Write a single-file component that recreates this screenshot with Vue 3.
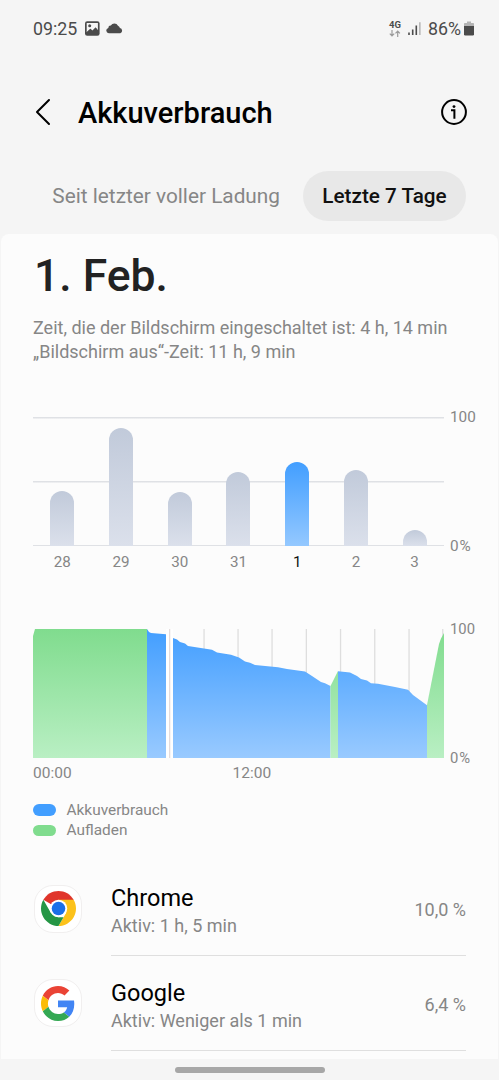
<template>
  <div class="screen">
    <div class="status-bar">
      <span class="clock">09:25</span>
      <svg class="icon-image" width="15" height="15" viewBox="0 0 15 15">
        <rect x="0" y="0.3" width="14.6" height="14.4" rx="2.2" fill="#4b4b4b" />
        <path d="M1.7 11.2V2.1h11.2v7.2L10.6 6.4 7.4 9.7 5.4 7.8z" fill="#f5f5f5" />
        <path d="M1.7 11.2 5.4 7.8l2 1.9 3.2-3.3 2.3 2.9v3.6H1.7z" fill="#4b4b4b" />
        <circle cx="4.7" cy="4.8" r="1.5" fill="#4b4b4b" />
      </svg>
      <svg class="icon-cloud" width="17" height="11" viewBox="0 0 17 11">
        <path
          d="M2.8 10.2a2.7 2.7 0 0 1-.5-5.3A2.4 2.4 0 0 1 4.8 2.6 4.2 4.2 0 0 1 12 2.7a3.200 3.200 0 0 1 1.900 2.300 2.700 2.700 0 0 1 .4 5.200z"
          fill="#4b4b4b"
        />
      </svg>
      <span class="spacer"></span>
      <div class="network">
        <span class="network-type">4G</span>
        <svg width="12" height="7" viewBox="0 0 12 7" fill="none" stroke="#9b9b9b" stroke-width="1.2">
          <path d="M3 0v5.8M.8 3.7 3 6l2.2-2.3M8.7 7V1M6.5 3.3 8.7 1l2.2 2.3" />
        </svg>
      </div>
      <svg class="icon-signal" width="14" height="14" viewBox="0 0 14 14">
        <path d="M.2 10.6h1.6V13H.2zM3.9 7.4h1.6V13H3.9zM7.5 3.6h1.6V13H7.5z" fill="#4b4b4b" />
        <path d="M11.1.3h1.5V13h-1.5z" fill="#b4b4b4" />
      </svg>
      <span class="battery-text">86%</span>
      <svg class="icon-battery" width="10" height="15" viewBox="0 0 10 15">
        <path d="M3 .5h4v1.4h2.2a.8.8 0 0 1 .8.8V5H0V2.7a.8.8 0 0 1 .8-.8H3z" fill="#b4b4b4" />
        <path d="M0 4.900h10v8.400a1.200 1.200 0 0 1-1.200 1.200H1.200A1.200 1.200 0 0 1 0 13.300z" fill="#4b4b4b" />
      </svg>
    </div>

    <header class="header">
      <svg width="16" height="28" viewBox="0 0 16 28" fill="none" stroke="#000" stroke-width="2">
        <path d="M14 2 2 14l12 12" stroke-linecap="round" stroke-linejoin="round" />
      </svg>
      <h1 class="title">Akkuverbrauch</h1>
      <svg class="info" width="28" height="28" viewBox="0 0 28 28">
        <circle cx="14" cy="14" r="11.9" fill="none" stroke="#000" stroke-width="2" />
        <circle cx="14" cy="8.6" r="1.45" fill="#000" />
        <path d="M11 12.3h3.4v8.4" fill="none" stroke="#000" stroke-width="2" />
      </svg>
    </header>

    <nav class="tabs">
      <span class="tab">Seit letzter voller Ladung</span>
      <span class="tab tab-active">Letzte 7 Tage</span>
    </nav>

    <main class="panel">
      <h2 class="date">1. Feb.</h2>
      <p class="summary">
        Zeit, die der Bildschirm eingeschaltet ist: 4 h, 14 min<br />
        „Bildschirm aus“-Zeit: 11 h, 9 min
      </p>

      <section class="chart">
        <div class="bars">
          <div v-for="d in days" :key="d.label" class="bar-col">
            <div class="bar" :class="{ selected: d.selected }" :style="{ height: d.height + 'px' }"></div>
          </div>
        </div>
        <div class="axis">
          <span>100</span>
          <span class="zero">0%</span>
        </div>
      </section>
      <div class="day-labels">
        <span v-for="d in days" :key="d.label" :class="{ current: d.selected }">{{ d.label }}</span>
      </div>

      <section class="chart history">
        <svg width="411" height="129" viewBox="0 0 411 129">
          <defs>
            <linearGradient id="use" gradientUnits="userSpaceOnUse" x1="0" y1="0" x2="0" y2="129">
              <stop offset="0" stop-color="#429eff" />
              <stop offset="1" stop-color="#99caff" />
            </linearGradient>
            <linearGradient id="charge" gradientUnits="userSpaceOnUse" x1="0" y1="0" x2="0" y2="129">
              <stop offset="0" stop-color="#80dc8e" />
              <stop offset="1" stop-color="#b9efc3" />
            </linearGradient>
          </defs>
          <rect v-for="x in gridLines" :key="x" :x="x" y="0" width="1.3" height="129" fill="#dedede" />
          <polygon v-for="(a, i) in areas" :key="i" :points="a.points" :fill="`url(#${a.type})`" />
          <rect x="133" y="0" width="7" height="129" fill="#fff" />
          <rect x="136" y="0" width="1.3" height="129" fill="#e4dcdc" />
        </svg>
        <div class="axis">
          <span>100</span>
          <span class="zero">0%</span>
        </div>
      </section>
      <div class="time-labels">
        <span>00:00</span>
        <span>12:00</span>
      </div>

      <ul class="legend">
        <li><i class="pill use"></i>Akkuverbrauch</li>
        <li><i class="pill charge"></i>Aufladen</li>
      </ul>

      <ul class="apps">
        <li v-for="app in apps" :key="app.name" class="app">
          <div class="app-icon">
            <svg v-if="app.icon === 'chrome'" width="35" height="35" viewBox="0 0 48 48">
              <path d="M24 24 3.22 12A24 24 0 0 1 44.78 12z" fill="#e0352b" />
              <path d="M24 12h20.78A24 24 0 0 1 24 48l10.39-18z" fill="#fcc21b" />
              <path d="M3.22 12 13.61 30 24 36h6.93L24 48A24 24 0 0 1 3.22 12z" fill="#259645" />
              <circle cx="24" cy="24" r="12" fill="#fff" />
              <circle cx="24" cy="24" r="9.3" fill="#1a6fe8" />
            </svg>
            <svg v-else width="34" height="35" viewBox="0 0 48 48" preserveAspectRatio="none">
              <path fill="#ea4335" d="M24 9.5c3.54 0 6.71 1.22 9.21 3.6l6.85-6.85C35.9 2.38 30.47 0 24 0 14.62 0 6.51 5.38 2.56 13.22l7.98 6.19C12.43 13.72 17.74 9.5 24 9.5z" />
              <path fill="#4285f4" d="M46.98 24.55c0-1.57-.15-3.09-.38-4.55H24v9.02h12.94c-.58 2.96-2.26 5.48-4.78 7.18l7.73 6c4.51-4.18 7.09-10.36 7.09-17.65z" />
              <path fill="#fbbc05" d="M10.53 28.59c-.48-1.45-.76-2.99-.76-4.59s.27-3.14.76-4.59l-7.98-6.19C.92 16.46 0 20.12 0 24c0 3.88.92 7.54 2.56 10.78l7.97-6.19z" />
              <path fill="#34a853" d="M24 48c6.48 0 11.93-2.13 15.89-5.81l-7.73-6c-2.15 1.45-4.92 2.3-8.16 2.3-6.26 0-11.57-4.22-13.47-9.91l-7.98 6.19C6.51 42.62 14.62 48 24 48z" />
            </svg>
          </div>
          <div class="app-row">
            <div class="app-text">
              <span class="app-name">{{ app.name }}</span>
              <span class="app-active">{{ app.active }}</span>
            </div>
            <span class="app-percent">{{ app.percent }}</span>
          </div>
        </li>
      </ul>
    </main>

    <div class="gesture-bar"><div class="handle"></div></div>
  </div>
</template>

<script setup>
const days = [
  { label: "28", height: 55 },
  { label: "29", height: 118 },
  { label: "30", height: 54.5 },
  { label: "31", height: 74 },
  { label: "1", height: 84.5, selected: true },
  { label: "2", height: 76 },
  { label: "3", height: 16 },
];

const gridLines = [171, 205, 239, 273.3, 307.5, 341.7, 376, 409.7].map((x) => x - 0.6);

// battery level over the day, y grows downwards
const areas = [
  { type: "charge", points: "0,129 0,7 2,0 114,0 114,129" },
  { type: "use", points: "114,129 114,0 116,3 118,4 133,5.3 133,129" },
  {
    type: "use",
    points:
      "140,129 140,9 144,10.5 147,13 152,14.5 155,17 171,19.5 179,20.8 184,23.5 198,25.8 206,28.5 212,32.6 217,33.7 222,36 245,38.3 254,40 272,42.4 279,47 288,53 292,54.3 297.5,57 297.5,129",
  },
  { type: "charge", points: "297.5,129 297.5,57 305,42 305,129" },
  {
    type: "use",
    points:
      "305,129 305,42.2 317,43.6 324,47 328,50 334,51.5 338,54.2 345,54.7 362,58 375,60.8 380,66 394,76.3 394,129",
  },
  { type: "charge", points: "394,129 394,76 406,15 408,9.5 411,4 411,129" },
];

const apps = [
  { name: "Chrome", icon: "chrome", active: "Aktiv: 1 h, 5 min", percent: "10,0 %" },
  { name: "Google", icon: "google", active: "Aktiv: Weniger als 1 min", percent: "6,4 %" },
];
</script>

<style>
body {
  margin: 0;
  background: #f5f5f5;
}
</style>

<style scoped>
.screen {
  display: flex;
  flex-direction: column;
  width: 499px;
  height: 1080px;
  overflow: hidden;
  background: #f5f5f5;
  font-family: Roboto, "Liberation Sans", sans-serif;
  color: #868686;
}

h1,
h2,
p,
ul {
  margin: 0;
  padding: 0;
  list-style: none;
}

svg {
  display: block;
  flex-shrink: 0;
}

.status-bar {
  display: flex;
  align-items: center;
  height: 57px;
  margin-bottom: 1px;
  padding: 0 25px 0 33px;
  color: #4b4b4b;
  font-size: 17.8px;
}

.icon-image {
  margin-left: 8px;
}

.icon-cloud {
  margin-left: 6px;
}

.spacer {
  flex: 1;
}

.network {
  display: flex;
  flex-direction: column;
  align-items: center;
  gap: 1px;
  margin-right: 7px;
}

.network-type {
  font-size: 9.5px;
  font-weight: 700;
  line-height: 8px;
}

.icon-signal {
  margin-right: 6px;
}

.icon-battery {
  margin-left: 3px;
}

.header {
  display: flex;
  align-items: center;
  height: 108px;
  padding: 0 31px 0 35px;
}

.title {
  flex: 1;
  margin-left: 27px;
  padding-top: 2px;
  color: #000;
  font-size: 29px;
  font-weight: 500;
}

.tabs {
  display: flex;
  justify-content: flex-end;
  align-items: center;
  height: 59px;
  padding-right: 33px;
  padding-bottom: 9px;
}

.tab {
  font-size: 20.8px;
  margin-right: 23px;
  white-space: nowrap;
}

.tab-active {
  box-sizing: border-box;
  width: 163px;
  height: 50px;
  margin-right: 0;
  border-radius: 25px;
  background: #e8e8e8;
  color: #111;
  font-size: 20.7px;
  font-weight: 500;
  line-height: 51px;
  text-align: center;
}

.panel {
  box-sizing: border-box;
  flex: 1;
  min-height: 0;
  margin: 0 1px;
  padding: 14px 32px 0;
  border-radius: 8px 8px 0 0;
  background: #fcfcfc;
  overflow: hidden;
}

.date {
  height: 54px;
  padding-left: 1px;
  color: #222;
  font-size: 44.5px;
  font-weight: 500;
  line-height: 56px;
}

.summary {
  height: 49px;
  margin-top: 14px;
  font-size: 18px;
  line-height: 24.4px;
  white-space: nowrap;
}

.chart {
  display: flex;
  height: 129px;
  margin-top: 52px;
}

.bars {
  display: grid;
  flex-shrink: 0;
  grid-template-columns: repeat(7, 1fr);
  width: 411px;
  background:
    linear-gradient(#dfe1e5, #dfe1e5) 0 0 / 100% 1.5px no-repeat,
    linear-gradient(#dfe1e5, #dfe1e5) 0 50% / 100% 1.5px no-repeat,
    linear-gradient(#dfe1e5, #dfe1e5) 0 100% / 100% 1.5px no-repeat;
}

.bar-col {
  display: flex;
  justify-content: center;
  align-items: flex-end;
}

.bar {
  width: 24px;
  border-radius: 12px 12px 0 0;
  background: linear-gradient(#c1cada, #dbe0eb);
}

.bar.selected {
  background: linear-gradient(#429eff, #94c8ff);
}

.axis {
  display: flex;
  flex-direction: column;
  justify-content: space-between;
  margin: -9px 0 -9px 6px;
  font-size: 15.3px;
  line-height: 18px;
}

.zero {
  letter-spacing: 1px;
}

.day-labels {
  display: grid;
  grid-template-columns: repeat(7, 1fr);
  width: 411px;
  height: 18px;
  margin-top: 7px;
  font-size: 15.2px;
  line-height: 18px;
  text-align: center;
}

.current {
  color: #111;
}

.history {
  margin-top: 58px;
}

.history .axis {
  font-size: 14.8px;
}

.time-labels {
  display: flex;
  gap: 161px;
  height: 18px;
  margin-top: 6px;
  font-size: 15.5px;
  line-height: 18px;
}

.legend {
  margin-top: 17.5px;
  font-size: 15.4px;
}

.legend li {
  display: flex;
  align-items: center;
  height: 20.5px;
}

.pill {
  width: 22.5px;
  height: 11.5px;
  margin-right: 11px;
  border-radius: 6px;
}

.pill.use {
  background: #429eff;
}

.pill.charge {
  background: #80dc8e;
}

.apps {
  margin-top: 21px;
}

.app {
  display: flex;
  height: 94.5px;
}

.app-icon {
  display: flex;
  align-items: center;
  justify-content: center;
  box-sizing: border-box;
  width: 48px;
  height: 48px;
  margin: 23px 29px 0 1px;
  border: 1px solid #f1efef;
  border-radius: 19px;
  background: #fff;
}

.app-row {
  display: flex;
  flex: 1;
  align-items: center;
  justify-content: space-between;
  box-sizing: border-box;
  padding-top: 3px;
  border-bottom: 1px solid #dfdfdf;
}

.app-text {
  display: flex;
  flex-direction: column;
  padding-top: 4px;
}

.app-name {
  color: #000;
  font-size: 23.5px;
  line-height: 29px;
}

.app-active {
  font-size: 18px;
  line-height: 26px;
}

.app-percent {
  font-size: 18px;
}

.gesture-bar {
  display: flex;
  justify-content: center;
  height: 21px;
}

.handle {
  width: 150px;
  height: 6px;
  margin-top: 8px;
  border-radius: 3px;
  background: #a7a7a7;
}
</style>
